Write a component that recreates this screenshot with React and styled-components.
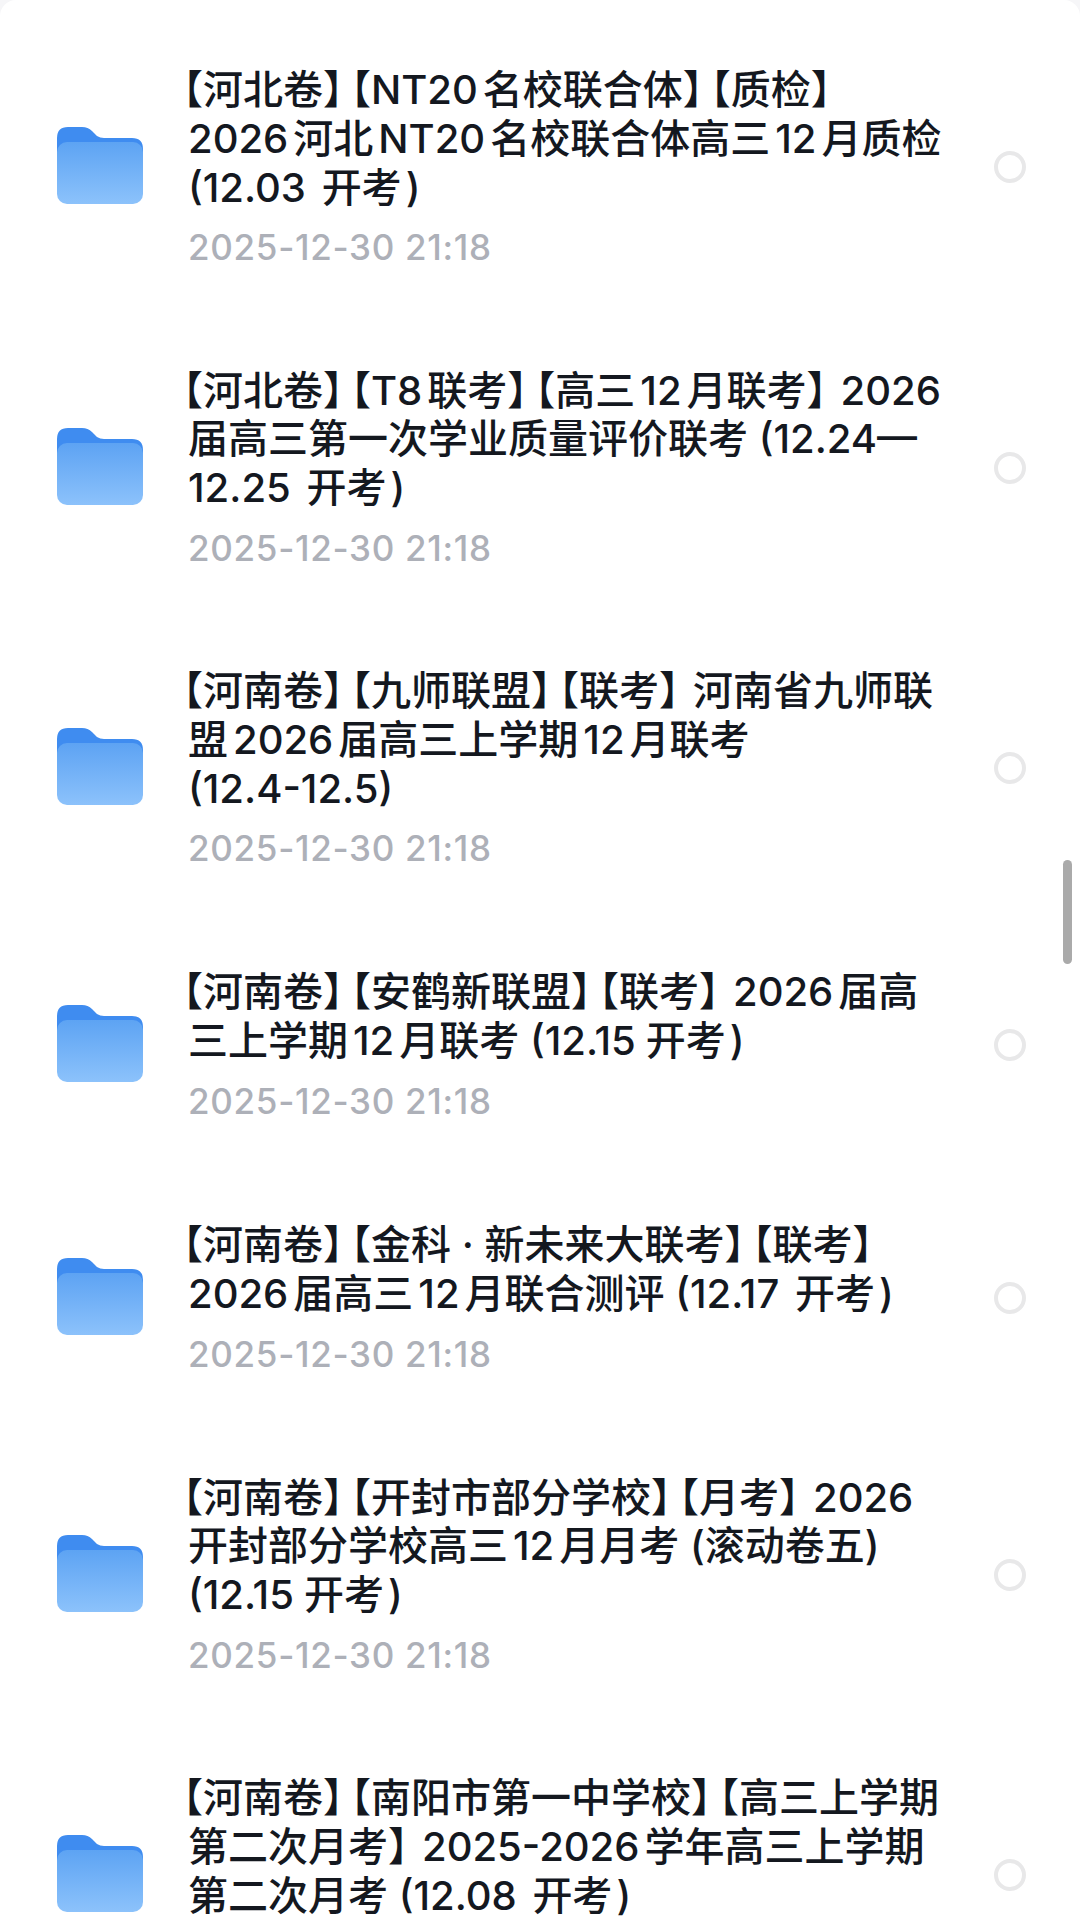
import React from "react";
import styled, { createGlobalStyle } from "styled-components";

const Global = createGlobalStyle`
  html, body { margin: 0; padding: 0; background: #f6f6f8; }
  body { width: 1080px; height: 1925px; overflow: hidden; }
`;

const Page = styled.div`
  position: relative;
  width: 1080px;
  height: 1925px;
  overflow: hidden;
  background: #fff;
  border-radius: 16px 16px 0 0;
  padding-top: 17px;
  box-sizing: border-box;
  font-family: Inter, "Noto Sans CJK SC", sans-serif;
`;

const List = styled.div`
  display: flex;
  flex-direction: column;
`;

const Row = styled.div`
  display: flex;
  align-items: center;
  height: ${(p) => (p.$lines === 3 ? 300.5 : 253)}px;
  flex-shrink: 0;
  padding-left: 57px;
`;

const FolderIcon = styled.svg`
  width: 86px;
  height: 77px;
  flex-shrink: 0;
  margin-right: 45px;
  margin-bottom: 3px;
`;

const Body = styled.div`
  flex: 1;
  min-width: 0;
  margin-bottom: 1px;
`;

const Title = styled.div`
  font-size: 40px;
  line-height: 48.7px;
  font-weight: 500;
  color: #14181f;
  white-space: nowrap;
  text-spacing-trim: space-all;
  text-autospace: normal;
`;

const Line = styled.div``;

const OpenBracket = styled.span`
  margin-left: ${(p) => (p.$first ? "-0.625em" : "0")};
`;

const CloseBracket = styled.span`
  margin-right: ${(p) => p.$trim};
`;

const ExamLabel = styled.span`
  margin-left: 5px;
`;

const ExamParen = styled.span`
  margin-left: 4px;
`;

const Time = styled.div`
  margin-top: 15px;
  font-size: 35px;
  line-height: 40px;
  font-weight: 500;
  letter-spacing: 0.7px;
  color: #adb0b8;
`;

const Radio = styled.div`
  width: 32px;
  height: 32px;
  box-sizing: border-box;
  border: 4px solid #e8e8e9;
  border-radius: 50%;
  flex-shrink: 0;
  margin-right: 54px;
`;

const ScrollThumb = styled.div`
  position: absolute;
  left: 1063px;
  top: 860px;
  width: 9px;
  height: 104px;
  border-radius: 5px;
  background: #aaaaaa;
`;

const Folder = ({ id }) => (
  <FolderIcon viewBox="0 0 86 77">
    <defs>
      <linearGradient id={id} x1="0" y1="0" x2="0" y2="1">
        <stop offset="0" stopColor="#5da3f3" />
        <stop offset="1" stopColor="#8cc2fb" />
      </linearGradient>
    </defs>
    <path
      d="M0 11 Q0 0 11 0 H25 Q31 0 35 4 L40 9 Q43 11 47 11 H75 Q86 11 86 22 V40 H0 Z"
      fill="#3f8cf0"
    />
    <rect x="0" y="15" width="86" height="62" rx="10" fill={`url(#${id})`} />
  </FolderIcon>
);

const items = [
  ["【河北卷】【NT20名校联合体】【质检】", "2026河北NT20名校联合体高三12月质检", "(12.03 开考)"],
  ["【河北卷】【T8联考】【高三12月联考】2026", "届高三第一次学业质量评价联考 (12.24—", "12.25 开考)"],
  ["【河南卷】【九师联盟】【联考】河南省九师联", "盟2026届高三上学期12月联考", "(12.4-12.5)"],
  ["【河南卷】【安鹤新联盟】【联考】2026届高", "三上学期12月联考 (12.15开考)"],
  ["【河南卷】【金科 · 新未来大联考】【联考】", "2026届高三12月联合测评 (12.17 开考)"],
  ["【河南卷】【开封市部分学校】【月考】2026", "开封部分学校高三12月月考 (滚动卷五)", "(12.15开考)"],
  ["【河南卷】【南阳市第一中学校】【高三上学期", "第二次月考】2025-2026学年高三上学期", "第二次月考 (12.08 开考)"],
];

const closeTrim = (next) => {
  if (next === "【") return "-0.8em";
  return next ? "-0.15em" : "0";
};

const renderLine = (line) =>
  line.split(/(【|】|开考\))/).filter(Boolean).map((part, i, parts) => {
    if (part === "【") return <OpenBracket key={i} $first={i === 0}>{part}</OpenBracket>;
    if (part === "】") return <CloseBracket key={i} $trim={closeTrim(parts[i + 1])}>{part}</CloseBracket>;
    if (part === "开考)")
      return (
        <ExamLabel key={i}>
          开考<ExamParen>)</ExamParen>
        </ExamLabel>
      );
    return <span key={i}>{part}</span>;
  });

export default function App() {
  return (
    <>
      <Global />
      <Page>
        <List>
          {items.map((lines, i) => (
            <Row key={i} $lines={lines.length}>
              <Folder id={`folder-grad-${i}`} />
              <Body>
                <Title>
                  {lines.map((l) => (
                    <Line key={l}>{renderLine(l)}</Line>
                  ))}
                </Title>
                <Time>2025-12-30 21:18</Time>
              </Body>
              <Radio />
            </Row>
          ))}
        </List>
        <ScrollThumb />
      </Page>
    </>
  );
}
